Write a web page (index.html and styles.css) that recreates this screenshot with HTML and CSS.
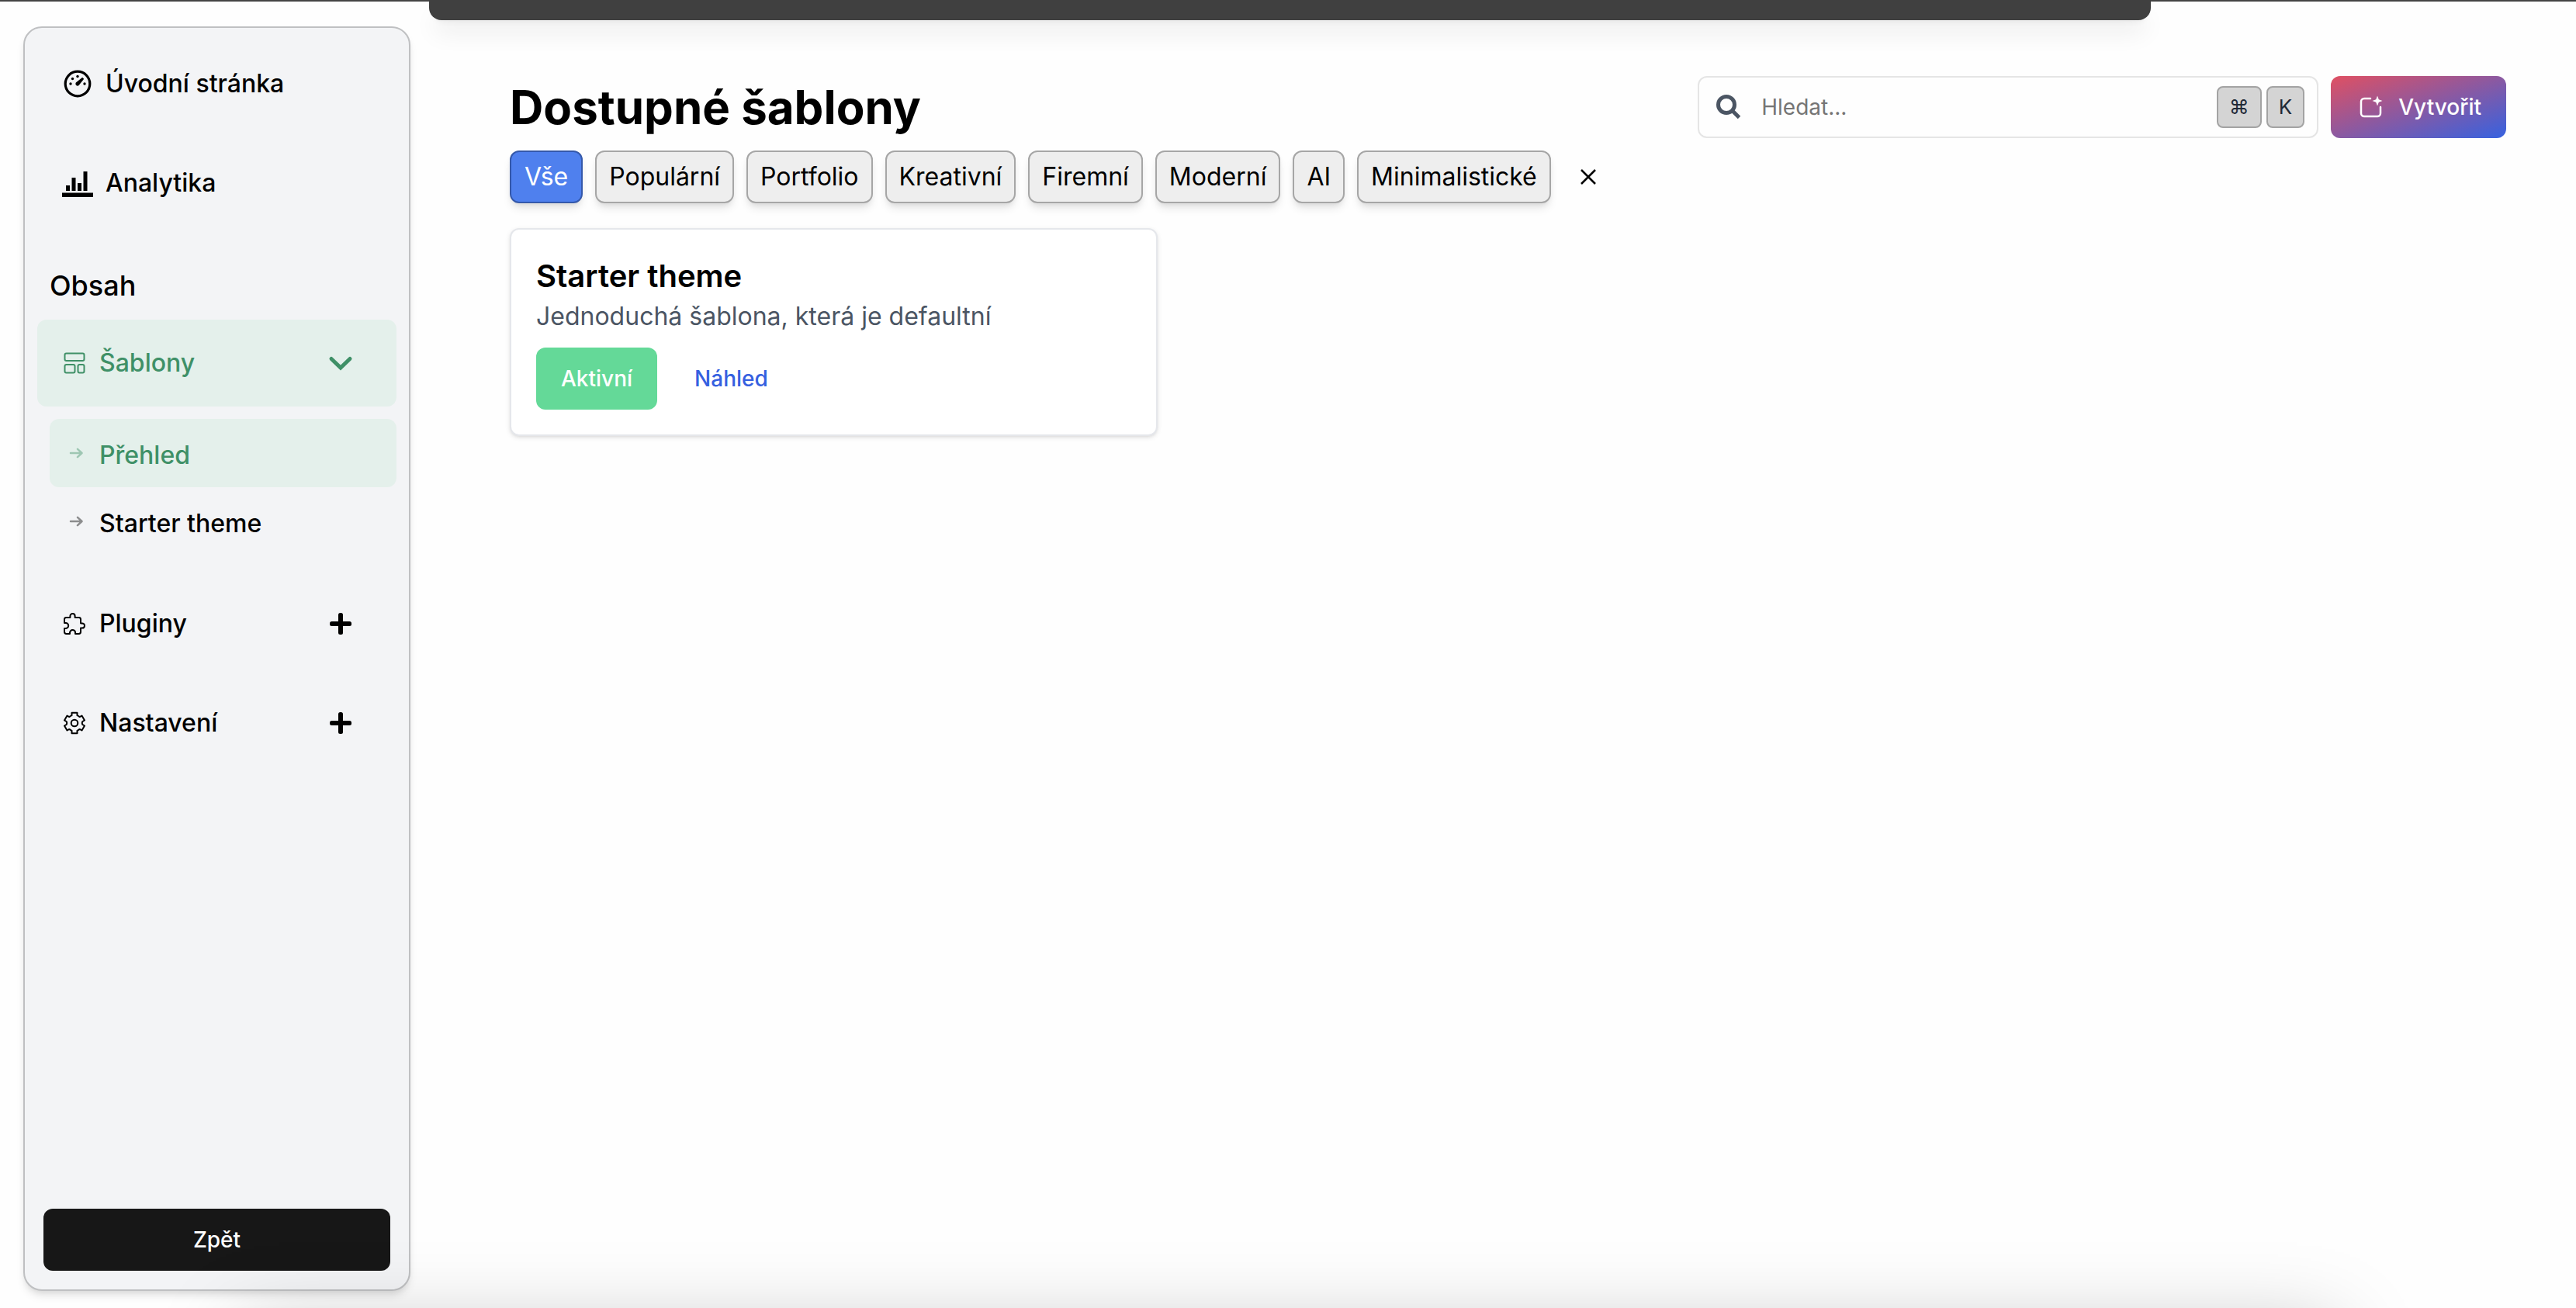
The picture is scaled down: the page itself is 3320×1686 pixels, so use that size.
FILE: index.html
```html
<!DOCTYPE html>
<html lang="cs">
<head>
<meta charset="utf-8">
<title>Dostupné šablony</title>
<link rel="stylesheet" href="styles.css">
</head>
<body>
<div class="topline"></div>
<div class="drawer-edge"></div>
<div class="layout">
  <aside class="sidebar">
    <nav class="nav">
      <a class="nav-item" href="#">
        <svg class="icon-lg" viewBox="0 0 40 40" fill="none" stroke="currentColor"><circle cx="20" cy="20" r="15.800" stroke-width="3.200"/><path d="M26.200 11.800l2 2-5.800 7.200a2.600 2.600 0 1 1-3.700-3.200z" fill="currentColor" stroke="none"/><g fill="currentColor" stroke="none"><circle cx="20" cy="10.500" r="1.700"/><circle cx="13.500" cy="13.500" r="1.700"/><circle cx="11" cy="20" r="1.700"/><circle cx="29" cy="20" r="1.700"/></g></svg>
        <span>Úvodní stránka</span>
      </a>
      <a class="nav-item" href="#">
        <svg class="icon-lg" viewBox="0 0 40 40" fill="currentColor"><path d="M5 23h5v7H5zM12.500 13h5v17h-5zM20 20h5v10h-5zM27.500 5h5v25h-5zM0 32.500h40V38H0z"/></svg>
        <span>Analytika</span>
      </a>
      <h2 class="nav-heading">Obsah</h2>
      <a class="nav-item active" href="#">
        <svg class="icon" viewBox="0 0 32 32" fill="none" stroke="currentColor" stroke-width="2"><rect x="3.500" y="3.500" width="25" height="9.500" rx="2"/><rect x="3.500" y="18" width="13" height="10.500" rx="2"/><rect x="20.500" y="18" width="8" height="10.500" rx="2"/></svg>
        <span>Šablony</span>
        <svg class="toggle" viewBox="0 0 32 32" fill="none" stroke="currentColor" stroke-width="5" stroke-linecap="round"><path d="M4 10.500L16 22L28 10.500"/></svg>
      </a>
      <div class="subnav">
        <a class="sub-item active" href="#">
          <svg class="arrow" viewBox="0 0 20 20" fill="none" stroke="currentColor" stroke-width="2.500" stroke-linecap="round" stroke-linejoin="round"><path d="M3 10H17M12 4.800L17.500 10L12 15.200"/></svg>
          <span class="sub-label">Přehled</span>
        </a>
        <a class="sub-item" href="#">
          <svg class="arrow" viewBox="0 0 20 20" fill="none" stroke="currentColor" stroke-width="2.500" stroke-linecap="round" stroke-linejoin="round"><path d="M3 10H17M12 4.800L17.500 10L12 15.200"/></svg>
          <span class="sub-label">Starter theme</span>
        </a>
      </div>
      <a class="nav-item" href="#">
        <svg class="icon" viewBox="0 0 512 512" fill="none" stroke="currentColor" stroke-width="32" stroke-linejoin="round"><path d="M413.66 246.1H386a2 2 0 01-2-2v-77.24A38.86 38.86 0 00345.14 128H267.9a2 2 0 01-2-2V98.34c0-27.14-21.5-49.86-48.64-50.33a49.53 49.53 0 00-50.4 49.51V126a2 2 0 01-2 2H87.62A39.74 39.74 0 0048 167.62V238a2 2 0 002 2h26.91c29.37 0 53.68 25.48 54.09 54.85.42 29.87-23.51 57.15-53.29 57.15H50a2 2 0 00-2 2v70.38A39.74 39.74 0 0087.62 464H158a2 2 0 002-2v-20.93c0-30.28 24.75-56.35 55-57.06 30.1-.7 57 20.31 57 50.28V462a2 2 0 002 2h71.14A38.86 38.86 0 00384 425.14v-78a2 2 0 012-2h28.48c27.63 0 49.52-22.67 49.52-50.4s-23.2-48.64-50.34-48.64z"/></svg>
        <span>Pluginy</span>
        <svg class="toggle" viewBox="0 0 32 32" fill="currentColor"><rect x="2" y="13" width="28" height="6" rx="2.500"/><rect x="13" y="2" width="6" height="28" rx="2.500"/></svg>
      </a>
      <a class="nav-item" href="#">
        <svg class="icon" viewBox="0 0 32 32" fill="none" stroke="currentColor" stroke-width="2" stroke-linejoin="round"><circle cx="16" cy="16" r="4.300"/><path d="M12.500 2.800H19.500V6.200Q21.200 7 22.700 8.100L25.500 6.500L29 12.500L26.200 14.100Q25.300 16 26.200 17.900L29 19.500L25.500 25.500L22.700 23.900Q21.200 25 19.500 25.800V29.200H12.500V25.800Q10.800 25 9.300 23.900L6.500 25.500L3 19.500L5.800 17.900Q6.700 16 5.800 14.100L3 12.500L6.500 6.500L9.300 8.100Q10.800 7 12.500 6.200Z"/></svg>
        <span>Nastavení</span>
        <svg class="toggle" viewBox="0 0 32 32" fill="currentColor"><rect x="2" y="13" width="28" height="6" rx="2.500"/><rect x="13" y="2" width="6" height="28" rx="2.500"/></svg>
      </a>
    </nav>
    <button class="btn btn-dark" type="button">Zpět</button>
  </aside>
  <main class="main">
    <header class="header">
      <h1 class="title">Dostupné šablony</h1>
      <div class="actions">
        <label class="search">
          <svg class="icon search-icon" viewBox="0 0 32 32" fill="none" stroke="currentColor"><circle cx="13" cy="13" r="10.500" stroke-width="5"/><path d="M21 21l8.500 8.500" stroke-width="5"/></svg>
          <input class="search-input" type="text" placeholder="Hledat..." aria-label="Hledat">
          <span class="keys"><kbd class="key">⌘</kbd><kbd class="key">K</kbd></span>
        </label>
        <button class="btn btn-create" type="button">
          <svg class="icon" viewBox="0 0 32 32" fill="none" stroke="currentColor" stroke-width="2.500" stroke-linecap="round"><path d="M16 5H8a4 4 0 0 0-4 4v15a4 4 0 0 0 4 4h17a4 4 0 0 0 4-4v-8"/><path d="M25 1.500l1.800 4.700L31.500 8l-4.700 1.800L25 14.500l-1.800-4.700L18.500 8l4.700-1.800z" fill="currentColor" stroke="none"/></svg>
          Vytvořit
        </button>
      </div>
    </header>
    <div class="filters">
      <button class="chip chip-on" type="button">Vše</button>
      <button class="chip" type="button">Populární</button>
      <button class="chip" type="button">Portfolio</button>
      <button class="chip" type="button">Kreativní</button>
      <button class="chip" type="button">Firemní</button>
      <button class="chip" type="button">Moderní</button>
      <button class="chip" type="button">AI</button>
      <button class="chip" type="button">Minimalistické</button>
      <button class="clear" type="button" aria-label="Zrušit filtr"><svg class="icon" viewBox="0 0 32 32" fill="none" stroke="currentColor" stroke-width="2.500"><path d="M7 7l18 18M25 7L7 25"/></svg></button>
    </div>
    <div class="cards">
      <article class="card">
        <h2 class="card-title">Starter theme</h2>
        <p class="card-text">Jednoduchá šablona, která je defaultní</p>
        <div class="card-actions">
          <button class="btn btn-active" type="button">Aktivní</button>
          <a class="btn btn-link" href="#">Náhled</a>
        </div>
      </article>
    </div>
  </main>
</div>
<div class="bottom-shade"></div>
</body>
</html>
```
FILE: styles.css
```css
* { box-sizing: border-box; }

body {
  margin: 0;
  height: 100vh;
  overflow: hidden;
  background: #fefefe;
  color: #000;
  font-family: Inter, "Liberation Sans", sans-serif;
  font-size: 32px;
  line-height: 48px;
}

a { color: inherit; text-decoration: none; }
h1, h2, p { margin: 0; }
button, input, kbd { font-family: inherit; }
svg { flex: none; display: block; }

.topline { position: fixed; inset: 0 0 auto; height: 2px; background: #444; }

.drawer-edge {
  position: fixed;
  top: 0;
  left: calc(100% / 6);
  right: 16.5%;
  height: 26px;
  border-radius: 0 0 16px 16px;
  background: #404040;
  box-shadow: 0 20px 30px -6px rgba(0, 0, 0, .1), 0 8px 12px -8px rgba(0, 0, 0, .1);
}

.bottom-shade {
  position: fixed;
  left: 310px;
  right: 310px;
  top: calc(100% + 29px);
  height: 400px;
  box-shadow: 0 0 100px rgba(0, 0, 0, .25);
  pointer-events: none;
}

.layout { display: flex; height: 100%; padding: 34px 90px 22px 30px; }

.sidebar {
  display: flex;
  flex-direction: column;
  flex: none;
  width: 499px;
  padding-bottom: 24px;
  border: 2px solid #bfc0c2;
  border-radius: 24px;
  background: #f3f4f6;
  box-shadow: 0 8px 12px -2px rgba(0, 0, 0, .1), 0 4px 8px -4px rgba(0, 0, 0, .1);
}

.nav { display: flex; flex-direction: column; gap: 16px; flex: 1; padding: 16px; }

.nav-item {
  display: flex;
  align-items: center;
  gap: 16px;
  height: 112px;
  padding: 0 56px 0 32px;
  border-radius: 12px;
  font-weight: 500;
}
.nav-heading { padding: 32px 16px 0; font-size: 36px; font-weight: 500; line-height: 56px; }

.icon { width: 32px; height: 32px; }
.icon-lg { width: 40px; height: 40px; }
.toggle { width: 32px; height: 32px; margin-left: auto; }
.active { background: #e4f0eb; color: #3f9067; }

.subnav { display: flex; flex-direction: column; padding-left: 16px; margin-bottom: 16px; }
.sub-item {
  display: flex;
  align-items: center;
  gap: 20px;
  height: 88px;
  padding: 0 24px;
  border-radius: 12px;
  font-weight: 500;
}
.sub-label { padding-top: 6px; }
.arrow { width: 20px; height: 20px; opacity: .42; }

.btn {
  display: inline-flex;
  align-items: center;
  justify-content: center;
  gap: 20px;
  height: 80px;
  padding: 0 32px;
  border: 0;
  border-radius: 12px;
  font-size: 28px;
  font-weight: 500;
  line-height: 40px;
  color: #fff;
}
.btn-dark { margin: 0 24px; background: #171717; }
.btn-create { padding-left: 35px; background: linear-gradient(to bottom right, #e05062, #3662e0); }
.btn-active { background: #64d998; }
.btn-link { padding: 0 48px; color: #3560e0; }

.main { flex: 1; min-width: 0; padding: 64px 0 0 128px; }

.header { display: flex; align-items: center; justify-content: space-between; height: 80px; }
.title { font-size: 60px; font-weight: 700; line-height: 72px; }
.actions { display: flex; gap: 16px; }

.search {
  display: flex;
  align-items: center;
  gap: 24px;
  width: 800px;
  height: 80px;
  padding: 0 16px 0 22px;
  border: 2px solid #e5e5e5;
  border-radius: 12px;
}
.search-icon { color: #4b5563; }
.search-input {
  flex: 1;
  min-width: 0;
  padding: 0 2px;
  border: 0;
  outline: 0;
  background: none;
  font-size: 28px;
}
.search-input::placeholder { color: #757575; }
.keys { display: flex; gap: 6px; }
.key {
  height: 54px;
  padding: 0 14px;
  border: 2px solid #a3a3a3;
  border-radius: 8px;
  background: #d4d4d4;
  color: #1f2937;
  font-size: 26px;
  line-height: 50px;
}

.filters { display: flex; gap: 16px; margin-top: 16px; }
.chip {
  height: 68px;
  padding: 0 16px;
  border: 2px solid #a6a6a6;
  border-radius: 12px;
  background: #eee;
  color: #000;
  font-size: 32px;
  line-height: 48px;
  box-shadow: 0 8px 12px -2px rgba(0, 0, 0, .1), 0 4px 8px -4px rgba(0, 0, 0, .1);
}
.chip-on { padding: 0 17px; border-color: #3559ab; background: #4f80ee; color: #fff; }
.clear { padding: 0 16px; border: 0; background: none; color: #000; }

.cards { display: grid; grid-template-columns: repeat(3, 1fr); gap: 34px; margin-top: 32px; }
.card {
  padding: 32px;
  border: 2px solid #e5e7eb;
  border-radius: 12px;
  background: #fff;
  box-shadow: 0 2px 6px rgba(0, 0, 0, .1), 0 2px 4px -2px rgba(0, 0, 0, .1);
}
.card-title { font-size: 40px; font-weight: 600; line-height: 56px; }
.card-text { color: #4b5563; }
.card-actions { display: flex; margin-top: 16px; }
```
